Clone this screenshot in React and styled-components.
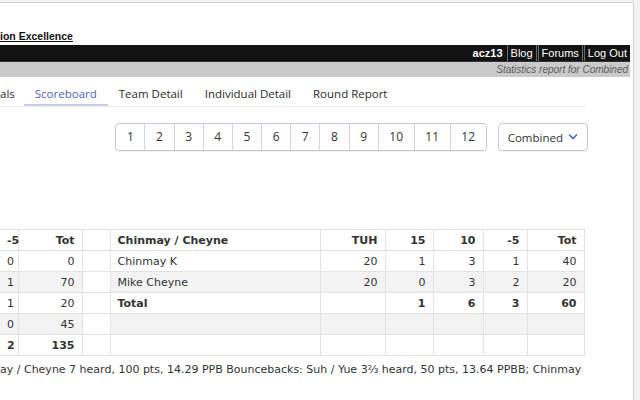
import React from 'react';
import styled, { createGlobalStyle } from 'styled-components';

const GlobalStyle = createGlobalStyle`
  html, body {
    margin: 0;
    padding: 0;
    background: #f3f3f3;
    overflow: hidden;
  }
`;

const Page = styled.div`
  width: 630px;
  height: 398px;
  margin-top: 2px;
  padding-right: 3px;
  background: #fff;
  border-top: 1px solid #d0d0d0;
  border-right: 1px solid #d0d0d0;
  overflow: hidden;
`;

const Heading = styled.div`
  margin-top: 27px;
  height: 15px;
  font-family: "Liberation Sans", Arial, sans-serif;
  font-size: 10.5px;
  font-weight: bold;
  line-height: 13px;
  color: #111;
  text-decoration: underline;
`;

const TopBar = styled.div`
  display: flex;
  justify-content: flex-end;
  align-items: stretch;
  height: 16px;
  background: #121212;
  border-bottom: 1px solid #333;
  font-family: "Liberation Sans", Arial, sans-serif;
  font-size: 11px;
  line-height: 16px;
  color: #fff;
`;

const UserName = styled.span`
  font-weight: bold;
  padding: 0 3px 0 0;
`;

const BarLink = styled.span`
  padding: 0 3px;
  border-left: 1px solid #6a6a6a;
  border-right: ${(p) => (p.last ? '0' : '1px solid #6a6a6a')};
  margin-left: 1px;
`;

const SubBar = styled.div`
  height: 15px;
  background: #cacaca;
  padding-right: 2px;
  text-align: right;
  font-family: "Liberation Sans", Arial, sans-serif;
  font-size: 10px;
  font-style: italic;
  line-height: 15px;
  color: #5a5a5a;
`;

const Main = styled.div`
  padding-right: 42px;
`;

const TabList = styled.div`
  display: flex;
  margin-top: 5px;
  border-bottom: 1px solid #ececec;
  width: 586px;
  font-family: "Open Sans", "Noto Sans", sans-serif;
  font-size: 11.5px;
  line-height: 16px;
`;

const Tab = styled.div`
  padding: 4px ${(p) => (p.lead ? '9px 2px 0' : '11px 2px')};
  border-bottom: 2px solid ${(p) => (p.active ? '#c9cde8' : 'transparent')};
  color: ${(p) => (p.active ? '#4d62c6' : '#2b2b2b')};
`;

const Controls = styled.div`
  display: flex;
  justify-content: flex-end;
  gap: 11px;
  margin-top: 16px;
  font-family: "Open Sans", "Noto Sans", sans-serif;
  font-size: 12px;
  color: #333;
`;

const Pager = styled.div`
  display: flex;
  height: 26px;
  border: 1px solid #c6c9d4;
  border-radius: 4px;
  box-shadow: 0 1px 1px rgba(0, 0, 0, 0.06);
`;

const PageButton = styled.div`
  display: flex;
  align-items: center;
  padding: 0 10.65px;
  border-left: ${(p) => (p.first ? '0' : '1px solid #d2d5de')};
  line-height: 26px;
`;

const Select = styled.div`
  display: flex;
  align-items: center;
  gap: 5px;
  height: 26px;
  padding: 0 9px;
  border: 1px solid #c6c9d4;
  border-radius: 4px;
  box-shadow: 0 1px 1px rgba(0, 0, 0, 0.06);
  font-size: 11.5px;

  svg {
    flex-shrink: 0;
  }
`;

const Table = styled.table`
  margin-top: 78px;
  width: 584px;
  border-collapse: collapse;
  table-layout: fixed;
  font-family: "DejaVu Sans", Verdana, sans-serif;
  font-size: 11px;
  color: #333;
`;

const Row = styled.tr`
  background: ${(p) => (p.striped ? '#f3f3f3' : '#fff')};
`;

const Cell = styled.td`
  height: 20px;
  padding: 0 7px;
  border: 1px solid #e2e2e2;
  text-align: ${(p) => (p.left ? 'left' : 'right')};
  font-weight: ${(p) => (p.bold ? 'bold' : 'normal')};
  white-space: nowrap;
  overflow: hidden;
`;

const FirstCell = styled(Cell)`
  border-left: 0;
  padding-right: 6px;
`;

const Gap = styled.td`
  background: #fff;
  border: 1px solid #e2e2e2;
`;

const HeadCell = styled.th`
  height: 20px;
  padding: 0 ${(p) => (p.first ? 6 : 7)}px 0 7px;
  border: 1px solid #e2e2e2;
  border-left: ${(p) => (p.first ? '0' : '1px solid #e2e2e2')};
  text-align: ${(p) => (p.left ? 'left' : 'right')};
  font-weight: bold;
  background: #fff;
  white-space: nowrap;
`;

const Summary = styled.div`
  margin-top: 7px;
  font-family: "DejaVu Sans", Verdana, sans-serif;
  font-size: 11px;
  line-height: 14px;
  color: #333;
  white-space: nowrap;
`;

const Chevron = () => (
  <svg width="10" height="8" viewBox="0 0 10 8">
    <path d="M1.5 2 L5 5.5 L8.5 2" fill="none" stroke="#3d5bd9" strokeWidth="1.5" strokeLinecap="round" strokeLinejoin="round" />
  </svg>
);

const rounds = [1, 2, 3, 4, 5, 6, 7, 8, 9, 10, 11, 12];

const rows = [
  { neg: '0', tot: '0', name: 'Chinmay K', tuh: '20', p15: '1', p10: '3', n5: '1', total: '40' },
  { neg: '1', tot: '70', name: 'Mike Cheyne', tuh: '20', p15: '0', p10: '3', n5: '2', total: '20' },
  { neg: '1', tot: '20', name: 'Total', tuh: '', p15: '1', p10: '6', n5: '3', total: '60', bold: true },
  { neg: '0', tot: '45', name: '', tuh: '', p15: '', p10: '', n5: '', total: '' },
  { neg: '2', tot: '135', name: '', tuh: '', p15: '', p10: '', n5: '', total: '', boldLeft: true },
];

export default function App() {
  return (
    <>
      <GlobalStyle />
      <Page>
        <Heading>ion Excellence</Heading>
        <TopBar>
          <UserName>acz13</UserName>
          <BarLink>Blog</BarLink>
          <BarLink>Forums</BarLink>
          <BarLink last>Log Out</BarLink>
        </TopBar>
        <SubBar>Statistics report for Combined</SubBar>
        <Main>
          <TabList>
            <Tab lead>als</Tab>
            <Tab active>Scoreboard</Tab>
            <Tab>Team Detail</Tab>
            <Tab>Individual Detail</Tab>
            <Tab>Round Report</Tab>
          </TabList>
          <Controls>
            <Pager>
              {rounds.map((r, i) => (
                <PageButton key={r} first={i === 0}>{r}</PageButton>
              ))}
            </Pager>
            <Select>
              <span>Combined</span>
              <Chevron />
            </Select>
          </Controls>
          <Table>
            <colgroup>
              <col style={{ width: 18 }} />
              <col style={{ width: 64 }} />
              <col style={{ width: 28 }} />
              <col style={{ width: 210 }} />
              <col style={{ width: 65 }} />
              <col style={{ width: 48 }} />
              <col style={{ width: 50 }} />
              <col style={{ width: 44 }} />
              <col style={{ width: 57 }} />
            </colgroup>
            <tbody>
              <Row>
                <HeadCell first>-5</HeadCell>
                <HeadCell>Tot</HeadCell>
                <Gap />
                <HeadCell left>Chinmay / Cheyne</HeadCell>
                <HeadCell>TUH</HeadCell>
                <HeadCell>15</HeadCell>
                <HeadCell>10</HeadCell>
                <HeadCell>-5</HeadCell>
                <HeadCell>Tot</HeadCell>
              </Row>
              {rows.map((r, i) => (
                <Row key={i} striped={i % 2 === 1}>
                  <FirstCell bold={r.boldLeft}>{r.neg}</FirstCell>
                  <Cell bold={r.boldLeft}>{r.tot}</Cell>
                  <Gap />
                  <Cell left bold={r.bold}>{r.name}</Cell>
                  <Cell>{r.tuh}</Cell>
                  <Cell bold={r.bold}>{r.p15}</Cell>
                  <Cell bold={r.bold}>{r.p10}</Cell>
                  <Cell bold={r.bold}>{r.n5}</Cell>
                  <Cell bold={r.bold}>{r.total}</Cell>
                </Row>
              ))}
            </tbody>
          </Table>
          <Summary>
            ay / Cheyne 7 heard, 100 pts, 14.29 PPB Bouncebacks: Suh / Yue 3⅔ heard, 50 pts, 13.64 PPBB; Chinmay
          </Summary>
        </Main>
      </Page>
    </>
  );
}
